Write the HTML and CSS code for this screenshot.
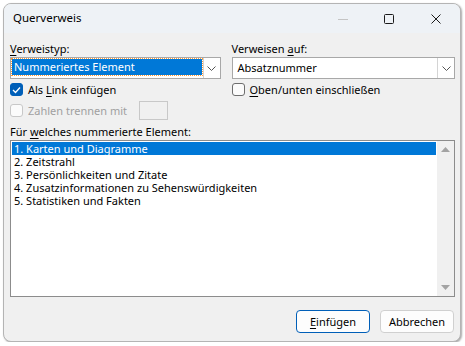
FILE: index.html
```html
<!DOCTYPE html>
<html>
  <head>
    <meta charset="utf-8" />
    <title>Querverweis</title>
    <link rel="stylesheet" href="styles.css">
  </head>

  <body>
    <div class="window">
      <div class="titlebar">
        <span class="title">Querverweis</span>
        <span class="ctl ctl-min">
          <svg width="10" height="10" viewBox="0 0 10 10"><path d="M0 5.5h10" stroke="#c4c4c4" stroke-width="1" /></svg>
        </span>
        <span class="ctl ctl-max">
          <svg width="10" height="10" viewBox="0 0 10 10"><rect x="0.5" y="0.5" width="9" height="9" rx="1" fill="none" stroke="#1a1a1a" stroke-width="1" /></svg>
        </span>
        <span class="ctl ctl-close">
          <svg width="10" height="10" viewBox="0 0 10 10"><path d="M0.5 0.5l9 9M9.5 0.5l-9 9" stroke="#1a1a1a" stroke-width="1" /></svg>
        </span>
      </div>

      <div class="content">
        <div class="cols">
          <div class="col col-left">
            <div class="label"><u>V</u>erweistyp:</div>
            <div class="combo">
              <div class="combo-value combo-selected"><span>Nummeriertes Element</span></div>
              <div class="combo-btn">
                <svg width="9" height="5" viewBox="0 0 9 5"><path d="M0.5 0.5l4 4 4-4" fill="none" stroke="#555" stroke-width="1" /></svg>
              </div>
            </div>
            <div class="check-row">
              <span class="check checked">
                <svg width="9" height="8" viewBox="0 0 9 8"><path d="M1 4l2.5 2.5L8 1.5" fill="none" stroke="#fff" stroke-width="1.3" /></svg>
              </span>
              <span>Als <u>L</u>ink einfügen</span>
            </div>
            <div class="check-row disabled">
              <span class="check"></span>
              <span>Zahlen trennen mit</span>
              <span class="small-input"></span>
            </div>
          </div>

          <div class="col col-right">
            <div class="label">Verweisen <u>a</u>uf:</div>
            <div class="combo">
              <div class="combo-value">Absatznummer</div>
              <div class="combo-btn">
                <svg width="9" height="5" viewBox="0 0 9 5"><path d="M0.5 0.5l4 4 4-4" fill="none" stroke="#555" stroke-width="1" /></svg>
              </div>
            </div>
            <div class="check-row">
              <span class="check"></span>
              <span><u>O</u>ben/unten einschließen</span>
            </div>
          </div>
        </div>

        <div class="label list-label">Für <u>w</u>elches nummerierte Element:</div>
        <div class="listbox">
          <ul class="items">
            <li class="selected">1. Karten und Diagramme</li>
            <li>2. Zeitstrahl</li>
            <li>3. Persönlichkeiten und Zitate</li>
            <li>4. Zusatzinformationen zu Sehenswürdigkeiten</li>
            <li>5. Statistiken und Fakten</li>
          </ul>
          <div class="scrollbar">
            <svg width="9" height="5" viewBox="0 0 9 5"><path d="M0 5L4.5 0 9 5z" fill="#a3a3a3" /></svg>
            <svg width="9" height="5" viewBox="0 0 9 5"><path d="M0 0L4.5 5 9 0z" fill="#a3a3a3" /></svg>
          </div>
        </div>

        <div class="buttons">
          <button class="btn btn-default"><u>E</u>infügen</button>
          <button class="btn">Abbrechen</button>
        </div>
      </div>
    </div>
  </body>
</html>
```

FILE: styles.css
```css
body {
  margin: 0;
  background: #ffffff;
  font-family: "Noto Sans", "Open Sans", sans-serif;
  font-size: 11px;
  color: #000000;
}

u {
  text-decoration-thickness: 1px;
  text-underline-offset: 2px;
}

.window {
  margin: 3px 0 0 3px;
  width: 456px;
  height: 337px;
  border: 1px solid #b4b4b4;
  border-radius: 8px;
  background: #f0f0f0;
  overflow: hidden;
  box-shadow: 1px 1px 2px rgba(0, 0, 0, 0.35);
}

.titlebar {
  height: 29px;
  background: #eef2f6;
  display: flex;
  align-items: center;
  font-size: 12px;
}

.title {
  flex: 1;
  padding-left: 9px;
  padding-bottom: 2px;
  font-size: 11.5px;
}

.ctl {
  width: 46px;
  height: 29px;
  display: flex;
  align-items: center;
  justify-content: center;
}

.ctl-close {
  width: 48px;
}

.content {
  padding: 7px 5px 0 6px;
}

.cols {
  display: flex;
  gap: 11px;
}

.col-left {
  width: 211px;
}

.col-right {
  width: 224px;
}

.label {
  height: 17px;
  line-height: 17px;
}

.combo {
  height: 20px;
  border: 1px solid #a8a8a8;
  background: #ffffff;
  display: flex;
}

.combo-value {
  flex: 1;
  padding: 0 5px;
  line-height: 19px;
}

.combo-selected {
  padding: 1px 1px;
}

.combo-selected span {
  display: block;
  height: 16px;
  line-height: 16px;
  padding-left: 2px;
  background: #0078d7;
  color: #ffffff;
  outline: 1px dotted #ff9933;
}

.combo-btn {
  width: 16px;
  border-left: 1px solid #d4d4d4;
  display: flex;
  align-items: center;
  justify-content: center;
}

.check-row {
  height: 21px;
  display: flex;
  align-items: center;
  gap: 5px;
}

.check-row.disabled {
  color: #a0a0a0;
}

.check {
  width: 11px;
  height: 11px;
  border: 1px solid #6e6e6e;
  border-radius: 3px;
  background: #fbfbfb;
  display: flex;
  align-items: center;
  justify-content: center;
}

.check.checked {
  background: #005fb8;
  border-color: #005fb8;
}

.disabled .check {
  border-color: #c8c8c8;
}

.small-input {
  width: 27px;
  height: 17px;
  margin-left: 7px;
  border: 1px solid #c8c8c8;
  background: #f0f0f0;
}

.list-label {
  margin-top: 2px;
}

.listbox {
  height: 155px;
  border: 1px solid #8c8c8c;
  background: #ffffff;
  display: flex;
}

.items {
  flex: 1;
  margin: 0;
  padding: 1px 1px;
  list-style: none;
}

.items li {
  height: 13px;
  line-height: 13px;
  padding-left: 2px;
}

.items li.selected {
  background: #0078d7;
  color: #ffffff;
}

.scrollbar {
  width: 17px;
  background: #f0f0f0;
  display: flex;
  flex-direction: column;
  justify-content: space-between;
  align-items: center;
  padding: 6px 0;
}

.buttons {
  display: flex;
  justify-content: flex-end;
  gap: 10px;
  margin-top: 13px;
  padding-right: 1px;
}

.btn {
  width: 74px;
  height: 23px;
  border: 1px solid #d0d0d0;
  border-radius: 4px;
  background: #fdfdfd;
  font-family: inherit;
  font-size: 11px;
  padding: 0;
  color: #000000;
}

.btn-default {
  border-color: #005fb8;
}
```
